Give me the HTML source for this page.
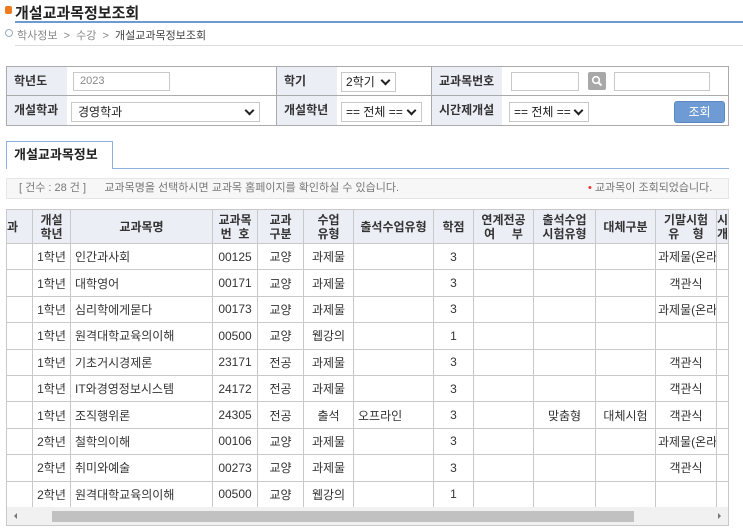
<!DOCTYPE html>
<html><head><meta charset="utf-8">
<style>
*{box-sizing:border-box;margin:0;padding:0}
body{width:743px;height:529px;overflow:hidden;background:#fff;font-family:"Liberation Sans","Noto Sans CJK KR",sans-serif;font-size:12px;color:#333;position:relative}
.a{position:absolute}
.lbl{position:absolute;background:#eceef6;font-weight:bold;color:#333;font-size:12px;padding-left:7px;line-height:28px}
.inp{position:absolute;border:1px solid #c8c8c8;background:#fff;height:19px;font-size:11px;line-height:17px;padding-left:6px;color:#333}
.sel{position:absolute;border:1px solid #c8c8c8;background:#fff;height:20px;font-size:12px;line-height:18px;padding-left:4px;color:#222}
.sel:after{content:"";position:absolute;right:6px;top:4px;width:5px;height:5px;border-right:2px solid #222;border-bottom:2px solid #222;transform:rotate(45deg)}
table{border-collapse:collapse;table-layout:fixed;font-size:12px}
td,th{border:1px solid #c9c9c9;height:26.4px;white-space:nowrap;overflow:hidden;color:#333;font-weight:normal}
th{background:#eceef6;font-weight:bold;line-height:14px;color:#333}
td{text-align:center}
td.l{text-align:left;padding-left:4px}
</style></head><body>
<div class="a" style="left:5px;top:6px;width:7px;height:8px;background:#f07a1e;border-radius:2px"></div>
<div class="a" style="left:15px;top:2px;font-size:15px;font-weight:bold;color:#222">개설교과목정보조회</div>
<div class="a" style="left:15px;top:21px;width:728px;height:2px;background:#6b9ad6"></div>
<div class="a" style="left:5px;top:29px;width:8px;height:8px;border:1px solid #9ab;border-radius:50%"></div>
<div class="a" style="left:17px;top:27px;font-size:11px;color:#888">학사정보 &nbsp;&gt;&nbsp; 수강 &nbsp;&gt;&nbsp; <span style="color:#444">개설교과목정보조회</span></div>
<div class="a" style="left:15px;top:45px;width:728px;height:1px;background:#ddd"></div>

<div class="a" style="left:6px;top:66px;width:723px;height:60px;border:1px solid #aaa"></div>
<div class="a" style="left:7px;top:95px;width:721px;height:1px;background:#aaa"></div>
<div class="a" style="left:276px;top:67px;width:1px;height:58px;background:#aaa"></div>
<div class="a" style="left:431px;top:67px;width:1px;height:58px;background:#aaa"></div>
<div class="lbl" style="left:7px;top:67px;width:60px;height:28px">학년도</div>
<div class="lbl" style="left:7px;top:96px;width:60px;height:29px">개설학과</div>
<div class="lbl" style="left:277px;top:67px;width:60px;height:28px">학기</div>
<div class="lbl" style="left:277px;top:96px;width:60px;height:29px">개설학년</div>
<div class="lbl" style="left:432px;top:67px;width:70px;height:28px">교과목번호</div>
<div class="lbl" style="left:432px;top:96px;width:70px;height:29px">시간제개설</div>
<div class="inp" style="left:73px;top:72px;width:97px;color:#888">2023</div>
<div class="sel" style="left:71px;top:102px;width:189px;padding-left:6px">경영학과</div>
<div class="sel" style="left:341px;top:72px;width:55px">2학기</div>
<div class="sel" style="left:341px;top:102px;width:81px">== 전체 ==</div>
<div class="inp" style="left:511px;top:72px;width:68px"></div>
<div class="a" style="left:588px;top:72px;width:18px;height:18px;background:#a8a8a8;border-radius:2px"><svg width="18" height="18" style="position:absolute;left:0;top:0"><circle cx="8" cy="8" r="3.3" fill="none" stroke="#fff" stroke-width="1.6"/><path d="M10.5 10.5L13.5 13.5" stroke="#fff" stroke-width="2"/></svg></div>
<div class="inp" style="left:614px;top:72px;width:96px"></div>
<div class="sel" style="left:509px;top:102px;width:80px">== 전체 ==</div>
<div class="a" style="left:674px;top:101px;width:51px;height:22px;background:#6f9bd4;border:1px solid #5b88c4;border-radius:3px;color:#fff;text-align:center;line-height:20px;font-size:12px">조회</div>

<div class="a" style="left:6px;top:141px;width:107px;height:28px;border:1px solid #8fb0dc;border-bottom:none;background:#fff;font-weight:bold;font-size:13px;line-height:26px;padding-left:7px;color:#222;z-index:2">개설교과목정보</div>
<div class="a" style="left:6px;top:168px;width:723px;height:1px;background:#8fb0dc"></div>
<div class="a" style="left:6px;top:178px;width:723px;height:21px;background:#f7f7f7;border:1px solid #e6e6e6;font-size:11px;line-height:19px;color:#777;padding-left:12px">[ 건수 : 28 건 ] &nbsp;&nbsp;&nbsp;&nbsp; 교과목명을 선택하시면 교과목 홈페이지를 확인하실 수 있습니다.</div>
<div class="a" style="left:588px;top:179px;font-size:11px;line-height:19px;color:#777"><span style="color:#e33">•</span> 교과목이 조회되었습니다.</div>

<div class="a" style="left:6px;top:209px;width:723px;height:317px;border:1px solid #c9c9c9;overflow:hidden">
<table style="position:absolute;left:-1px;top:-1px;width:760px">
<colgroup><col style="width:26px"><col style="width:38px"><col style="width:142px"><col style="width:45px"><col style="width:46px"><col style="width:50px"><col style="width:80px"><col style="width:40px"><col style="width:60px"><col style="width:62px"><col style="width:60px"><col style="width:61px"><col style="width:50px"></colgroup>
<tr style="height:34px"><th style="text-align:left">과</th><th>개설<br>학년</th><th>교과목명</th><th>교과목<br>번 &nbsp;호</th><th>교과<br>구분</th><th>수업<br>유형</th><th>출석수업유형</th><th>학점</th><th>연계전공<br>여 &nbsp;&nbsp;&nbsp;&nbsp;부</th><th>출석수업<br>시험유형</th><th>대체구분</th><th>기말시험<br>유 &nbsp;&nbsp;&nbsp;형</th><th style="text-align:left">시<br>개</th></tr>
<tr><td></td><td>1학년</td><td class="l">인간과사회</td><td>00125</td><td>교양</td><td>과제물</td><td></td><td>3</td><td></td><td></td><td></td><td class="l" style="padding-left:2px">과제물(온라</td><td></td></tr>
<tr><td></td><td>1학년</td><td class="l">대학영어</td><td>00171</td><td>교양</td><td>과제물</td><td></td><td>3</td><td></td><td></td><td></td><td>객관식</td><td></td></tr>
<tr><td></td><td>1학년</td><td class="l">심리학에게묻다</td><td>00173</td><td>교양</td><td>과제물</td><td></td><td>3</td><td></td><td></td><td></td><td class="l" style="padding-left:2px">과제물(온라</td><td></td></tr>
<tr><td></td><td>1학년</td><td class="l">원격대학교육의이해</td><td>00500</td><td>교양</td><td>웹강의</td><td></td><td>1</td><td></td><td></td><td></td><td></td><td></td></tr>
<tr><td></td><td>1학년</td><td class="l">기초거시경제론</td><td>23171</td><td>전공</td><td>과제물</td><td></td><td>3</td><td></td><td></td><td></td><td>객관식</td><td></td></tr>
<tr><td></td><td>1학년</td><td class="l">IT와경영정보시스템</td><td>24172</td><td>전공</td><td>과제물</td><td></td><td>3</td><td></td><td></td><td></td><td>객관식</td><td></td></tr>
<tr><td></td><td>1학년</td><td class="l">조직행위론</td><td>24305</td><td>전공</td><td>출석</td><td class="l">오프라인</td><td>3</td><td></td><td>맞춤형</td><td>대체시험</td><td>객관식</td><td></td></tr>
<tr><td></td><td>2학년</td><td class="l">철학의이해</td><td>00106</td><td>교양</td><td>과제물</td><td></td><td>3</td><td></td><td></td><td></td><td class="l" style="padding-left:2px">과제물(온라</td><td></td></tr>
<tr><td></td><td>2학년</td><td class="l">취미와예술</td><td>00273</td><td>교양</td><td>과제물</td><td></td><td>3</td><td></td><td></td><td></td><td>객관식</td><td></td></tr>
<tr><td></td><td>2학년</td><td class="l">원격대학교육의이해</td><td>00500</td><td>교양</td><td>웹강의</td><td></td><td>1</td><td></td><td></td><td></td><td></td><td></td></tr>
</table>
<div class="a" style="left:0;top:297px;width:721px;height:18px;background:#f1f1f1"></div>
<div class="a" style="left:45px;top:301px;width:582px;height:11px;background:#c1c1c1"></div>
<div class="a" style="left:7px;top:303px;width:0;height:0;border-top:3px solid transparent;border-bottom:3px solid transparent;border-right:3px solid #777"></div>
<div class="a" style="left:711px;top:303px;width:0;height:0;border-top:3px solid transparent;border-bottom:3px solid transparent;border-left:3px solid #777"></div>
</div>
</body></html>
